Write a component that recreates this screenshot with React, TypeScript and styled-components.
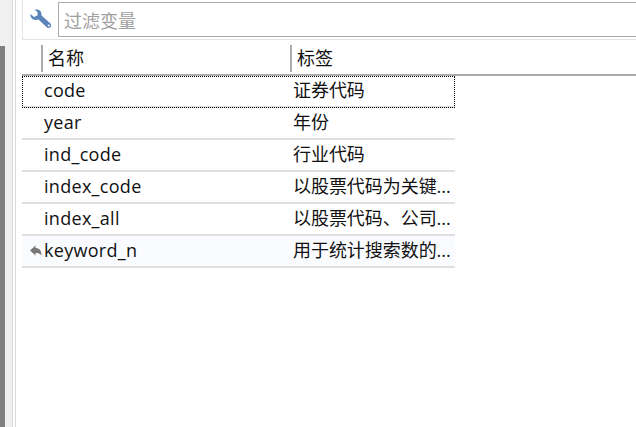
import React from 'react';
import styled, { createGlobalStyle } from 'styled-components';

const GlobalStyle = createGlobalStyle`
  html, body {
    margin: 0;
    padding: 0;
    background: #fff;
  }
`;

const Page = styled.div`
  width: 636px;
  height: 427px;
  display: flex;
  overflow: hidden;
  font-family: 'Open Sans', 'Noto Sans CJK SC', sans-serif;
  color: #111;
  font-size: 18px;
`;

const Scrollbar = styled.div`
  width: 5px;
  background: linear-gradient(#f0f0f0 46px, #808080 46px);
`;

const Gutter = styled.div`
  width: 7px;
  background: #f0f0f0;
  border-right: 1px solid #d9d9d9;
`;

const Main = styled.div`
  flex: 1;
  margin-left: 2px;
  border-left: 1px solid #d9d9d9;
  padding-left: 6px;
  min-width: 0;
`;

const FilterBar = styled.div`
  height: 40px;
  display: flex;
  align-items: flex-start;
  padding: 2px 0 0 7px;
  gap: 6px;
  border-left: 1px solid #e3e3e3;
  border-bottom: 1px solid #e3e3e3;
  box-sizing: border-box;
`;

const FilterInput = styled.div`
  flex: 1;
  height: 35px;
  box-sizing: border-box;
  border: 1px solid #ababab;
  border-right: 0;
  padding-left: 5px;
  line-height: 37px;
  color: #a0a0a0;
`;

const WrenchIcon = styled.svg`
  margin-top: 7px;
  flex: none;
`;

const HeaderRow = styled.div`
  height: 36px;
  display: flex;
  box-sizing: border-box;
  border-bottom: 2px solid #ababab;
  padding: 5px 0 0 19px;
`;

const HeaderCell = styled.div<{ $width: number }>`
  width: ${(p) => p.$width}px;
  height: 27px;
  box-sizing: border-box;
  border-left: 2px solid #ababab;
  padding-left: 5px;
  line-height: 27px;
`;

const Rows = styled.div`
  width: 433px;
`;

const Row = styled.div<{ $focused?: boolean; $hovered?: boolean }>`
  position: relative;
  height: 32px;
  display: flex;
  box-sizing: border-box;
  border-bottom: 2px solid #e0e0e0;
  line-height: 28px;
  background: ${(p) => (p.$hovered ? '#f9fbfe' : 'transparent')};
  ${(p) => p.$focused && 'outline: 1px dotted #000; outline-offset: -1px;'}
`;

const NameCell = styled.div`
  width: 271px;
  padding-left: 22px;
  box-sizing: border-box;
  letter-spacing: 0.3px;
`;

const LabelCell = styled.div`
  flex: 1;
  white-space: nowrap;
  letter-spacing: -0.05px;
`;

const RowMarker = styled.svg`
  position: absolute;
  left: 8px;
  top: 9px;
`;

const rows = [
  { name: 'code', label: '证券代码', focused: true },
  { name: 'year', label: '年份' },
  { name: 'ind_code', label: '行业代码' },
  { name: 'index_code', label: '以股票代码为关键...' },
  { name: 'index_all', label: '以股票代码、公司...' },
  { name: 'keyword_n', label: '用于统计搜索数的...', hovered: true },
];

const App: React.FC = () => (
  <Page>
    <GlobalStyle />
    <Scrollbar />
    <Gutter />
    <Main>
      <FilterBar>
        <WrenchIcon width="22" height="20" viewBox="0 0 22 20">
          <path
            d="M0.5 5 L4 8 L7.5 6.5 L7.5 3 L4.5 0.8 C8 -0.5 12 1.5 11.5 6.5 L20.5 14.5 C22.5 17 19.5 20.5 17 18.5 L8.5 10.5 C4 12 0 9.5 0.5 5 Z"
            fill="#5b84b8"
          />
          <circle cx="18.7" cy="16.5" r="1" fill="#fff" />
        </WrenchIcon>
        <FilterInput>过滤变量</FilterInput>
      </FilterBar>
      <HeaderRow>
        <HeaderCell $width={249}>名称</HeaderCell>
        <HeaderCell $width={200}>标签</HeaderCell>
      </HeaderRow>
      <Rows>
        {rows.map((r) => (
          <Row key={r.name} $focused={r.focused} $hovered={r.hovered}>
            {r.hovered && (
              <RowMarker width="12" height="11" viewBox="0 0 12 11">
                <path d="M0 5.5 L5.5 0.5 L5.5 3 C9 3 11.5 5 11.5 10.5 C10 8.5 8 8 5.5 8 L5.5 10.5 Z" fill="#777" />
              </RowMarker>
            )}
            <NameCell>{r.name}</NameCell>
            <LabelCell>{r.label}</LabelCell>
          </Row>
        ))}
      </Rows>
    </Main>
  </Page>
);

export default App;
